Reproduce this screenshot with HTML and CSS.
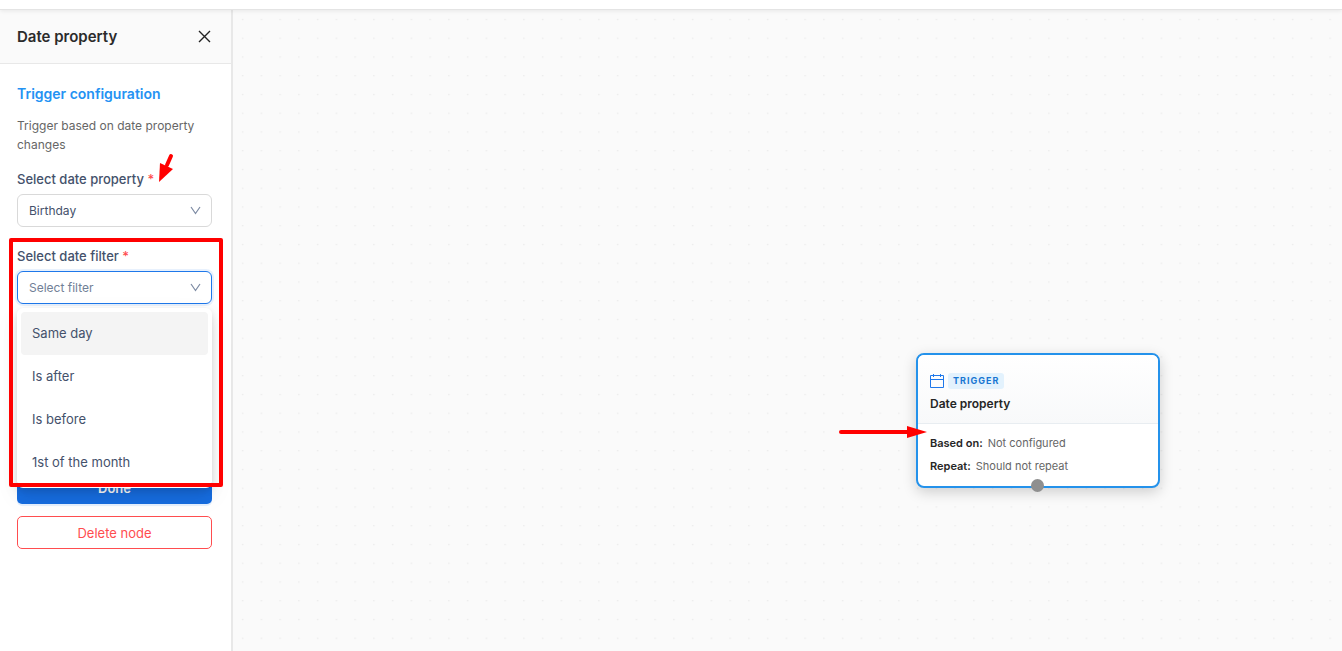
FILE: index.html
```html
<!DOCTYPE html>
<html lang="en">
<head>
  <meta charset="UTF-8">
  <meta name="viewport" content="width=device-width, initial-scale=1.0">
  <title>Date property</title>
  <link rel="stylesheet" href="styles.css">
</head>
<body>
  <header class="topbar"></header>

  <div class="workspace">
    <aside class="sidebar">
      <div class="sidebar-header">
        <h1>Date property</h1>
        <button class="close-btn" type="button" aria-label="Close">
          <svg width="13" height="13" viewBox="0 0 13 13" fill="none" stroke="#222" stroke-width="1.4"><path d="M1 1l11 11M12 1L1 12"/></svg>
        </button>
      </div>

      <form class="sidebar-body">
        <h2>Trigger configuration</h2>
        <p class="description">Trigger based on date property changes</p>

        <div class="field">
          <label for="date-property">Select date property <span class="required">*</span></label>
          <div class="select-box">
            <select id="date-property">
              <option>Birthday</option>
            </select>
            <svg class="chevron" width="11" height="9" viewBox="0 0 11 9" fill="none" stroke="#7c8aa3" stroke-width="1.2"><path d="M1 1l4.500 6.500L10 1"/></svg>
          </div>
        </div>

        <div class="field open">
          <label for="date-filter">Select date filter <span class="required">*</span></label>
          <div class="select-box">
            <select id="date-filter" class="placeholder">
              <option>Select filter</option>
            </select>
            <svg class="chevron" width="11" height="9" viewBox="0 0 11 9" fill="none" stroke="#7c8aa3" stroke-width="1.2"><path d="M1 1l4.500 6.500L10 1"/></svg>
            <ul class="dropdown" role="listbox" aria-label="Select date filter">
              <li class="active" role="option">Same day</li>
              <li role="option">Is after</li>
              <li role="option">Is before</li>
              <li role="option">1st of the month</li>
            </ul>
          </div>
          <div class="highlight"></div>
        </div>

        <div class="actions">
          <button class="btn btn-done" type="button">Done</button>
          <button class="btn btn-delete" type="button">Delete node</button>
        </div>
      </form>

      <svg class="arrow-label" width="20" height="32" viewBox="0 0 20 32"><path d="M14 4L10 13" stroke="#f00" stroke-width="4" stroke-linecap="round"/><path d="M2 30L3 11L16 17Z" fill="#f00"/></svg>
    </aside>

    <main class="canvas">
      <svg class="dots" width="100%" height="100%">
        <defs>
          <pattern id="grid" width="75" height="75" patternUnits="userSpaceOnUse" patternTransform="scale(0.25)">
            <circle cx="39" cy="38" r="2" fill="#dcdcdc"/>
          </pattern>
        </defs>
        <rect width="100%" height="100%" fill="url(#grid)"/>
      </svg>

      <article class="node">
        <div class="node-header">
          <div class="node-type">
            <svg width="14" height="14" viewBox="0 0 14 14" fill="none" stroke="#1f78ea"><path d="M.5 1.500h13v12H.5zM.5 5.500h13M3.500 0v3M10.500 0v3"/></svg>
            <span class="badge">TRIGGER</span>
          </div>
          <h3>Date property</h3>
        </div>
        <dl class="node-body">
          <div><dt>Based on:</dt><dd>Not configured</dd></div>
          <div><dt>Repeat:</dt><dd>Should not repeat</dd></div>
        </dl>
        <span class="handle"></span>
      </article>

      <svg class="arrow-node" width="90" height="14" viewBox="0 0 90 14"><path d="M3 7h68" stroke="#f00" stroke-width="4" stroke-linecap="round"/><path d="M69 1l20 6l-20 6z" fill="#f00"/></svg>
    </main>
  </div>
</body>
</html>
```
FILE: styles.css
```css
* {
  box-sizing: border-box;
}
body {
  margin: 0;
  height: 100vh;
  display: flex;
  flex-direction: column;
  overflow: hidden;
  font-family: Inter, "Noto Sans", sans-serif;
  font-size: 13px;
  color: #44516b;
  background: #fff;
}
h1, h2, h3, p, ul, dl, dd {
  margin: 0;
  padding: 0;
}
button, select {
  font: inherit;
}
.topbar {
  height: 10px;
  flex: none;
  border-bottom: 1px solid #e4e4e4;
  box-shadow: 0 1px 4px rgba(0, 0, 0, 0.08);
  z-index: 1;
}
.workspace {
  flex: 1;
  display: flex;
  min-height: 0;
}

/* sidebar */
.sidebar {
  position: relative;
  width: 233px;
  flex: none;
  border-right: 2px solid #e8e8e8;
}
.sidebar-header {
  height: 54px;
  padding: 0 16px 0 17px;
  display: flex;
  align-items: center;
  justify-content: space-between;
  background: #fafafa;
  border-bottom: 1px solid #e8e8e8;
}
.sidebar-header h1 {
  font-size: 15px;
  font-weight: 600;
  color: #2b2b2b;
}
.close-btn {
  display: flex;
  padding: 4px;
  border: none;
  background: none;
}
.sidebar-body {
  padding: 20px 19px 20px 17px;
}
.sidebar-body h2 {
  font-size: 14px;
  line-height: 20px;
  font-weight: 600;
  color: #2492f3;
}
.description {
  margin-top: 12px;
  font-size: 12px;
  line-height: 19px;
  color: #666;
}
.field {
  position: relative;
  margin-top: 15px;
}
.field label {
  display: block;
  line-height: 20px;
  margin-bottom: 5px;
  font-weight: 500;
}
.field + .field {
  margin-top: 19px;
}
.required {
  color: #ff4d4f;
}
.select-box {
  position: relative;
}
.select-box select {
  display: block;
  width: 100%;
  height: 33px;
  padding: 0 30px 0 11px;
  appearance: none;
  border: 1px solid #d9d9d9;
  border-radius: 6px;
  background: #fff;
  font-size: 12px;
  color: #44516b;
}
.select-box .placeholder {
  color: #718096;
}
.open select {
  border-color: #1f78ea;
  box-shadow: 0 0 0 2px rgba(31, 120, 234, 0.1);
}
.chevron {
  position: absolute;
  right: 11px;
  top: 12px;
}
.dropdown {
  position: absolute;
  z-index: 2;
  top: 100%;
  left: 0;
  right: 0;
  margin-top: 4px;
  padding: 4px;
  list-style: none;
  background: #fff;
  border-radius: 6px;
  box-shadow: 0 6px 16px rgba(0, 0, 0, 0.08), 0 3px 6px rgba(0, 0, 0, 0.1), 0 9px 28px rgba(0, 0, 0, 0.05);
}
.dropdown li {
  padding: 12px 11px;
  line-height: 19px;
  border-radius: 4px;
}
.dropdown .active {
  background: #f4f4f4;
}
.highlight {
  position: absolute;
  z-index: 3;
  top: -8px;
  left: -8px;
  right: -11px;
  height: 249px;
  border: 4px solid #f00;
  border-radius: 2px;
}
.actions {
  margin-top: 167px;
  display: flex;
  flex-direction: column;
  gap: 12px;
}
.btn {
  height: 33px;
  border-radius: 5px;
}
.btn-done {
  border: none;
  background: #176de0;
  color: #fff;
  font-weight: 600;
  box-shadow: 0 2px 0 rgba(5, 120, 255, 0.1);
}
.btn-delete {
  border: 1px solid #ff4d4f;
  background: #fff;
  color: #ff4d4f;
}
.arrow-label {
  position: absolute;
  left: 157px;
  top: 142px;
}

/* canvas */
.canvas {
  position: relative;
  flex: 1;
  min-width: 0;
  background: #fafafa;
}
.dots {
  display: block;
}
.node {
  position: absolute;
  left: 683px;
  top: 343px;
  width: 244px;
  background: #fff;
  border: 2px solid #2492eb;
  border-radius: 8px;
  box-shadow: 0 4px 14px rgba(0, 0, 0, 0.18);
}
.node-header {
  padding: 18px 12px 9px;
  border-bottom: 1px solid #e8edf1;
  border-radius: 6px 6px 0 0;
  background: linear-gradient(#fff, #f8f9fa);
}
.node-type {
  display: flex;
  align-items: center;
  gap: 4px;
}
.badge {
  padding: 0 5px;
  border-radius: 3px;
  background: #e3f2fd;
  color: #1976d2;
  font-size: 9px;
  line-height: 16px;
  font-weight: 700;
  letter-spacing: 1px;
}
.node h3 {
  margin-top: 5px;
  font-size: 12px;
  line-height: 20px;
  font-weight: 600;
  color: #262626;
}
.node-body {
  padding: 8px 12px;
  display: grid;
  font-size: 11px;
  line-height: 23px;
}
.node-body div {
  display: flex;
  gap: 5px;
}
.node-body dt {
  font-weight: 600;
  color: #262626;
}
.node-body dd {
  color: #666;
}
.handle {
  position: absolute;
  left: 50%;
  bottom: -6px;
  width: 13px;
  height: 13px;
  margin-left: -7px;
  border-radius: 50%;
  background: #8f8f8f;
}
.arrow-node {
  position: absolute;
  left: 605px;
  top: 415px;
}
```
